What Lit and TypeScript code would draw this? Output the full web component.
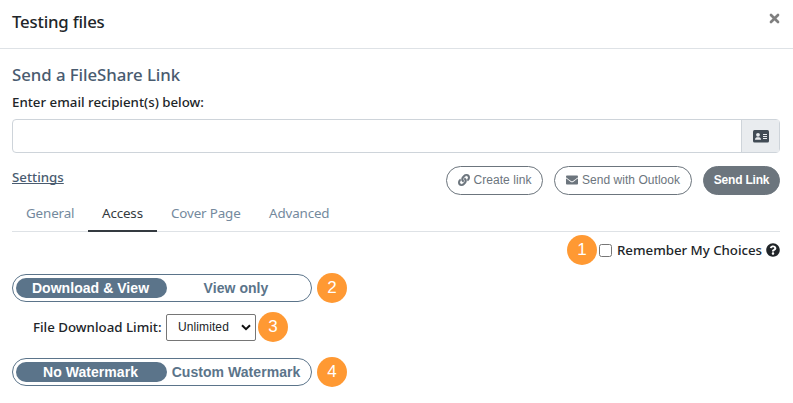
import { LitElement, html, css, svg } from "lit";
import { customElement, property } from "lit/decorators.js";

@customElement("step-badge")
class StepBadge extends LitElement {
  static styles = css`
    :host {
      display: block;
      flex: none;
      width: 30px;
      height: 30px;
      border-radius: 50%;
      background: #ff9933;
      color: #fff;
      font: 17px/30px "Liberation Sans", Arial, sans-serif;
      text-align: center;
    }
  `;
  render() {
    return html`<slot></slot>`;
  }
}

@customElement("pill-toggle")
class PillToggle extends LitElement {
  @property() on = "";
  @property() off = "";
  static styles = css`
    :host {
      box-sizing: border-box;
      display: flex;
      flex: none;
      width: 300px;
      height: 28px;
      padding: 3px;
      border: 1px solid #5b748a;
      border-radius: 14px;
      font: bold 14px/20px "Liberation Sans", Arial, sans-serif;
      letter-spacing: 0.05px;
      text-align: center;
      color: #5b748a;
      white-space: nowrap;
    }
    .on {
      width: 149px;
      height: 20px;
      padding-right: 2px;
      border-radius: 10px;
      background: #5b748a;
      color: #fff;
    }
    .off {
      flex: 1;
      padding-right: 3px;
    }
  `;
  render() {
    return html`<div class="on">${this.on}</div><div class="off">${this.off}</div>`;
  }
}

const linkIcon = svg`<path fill="currentColor" stroke="currentColor" stroke-width="14" d="M326.612 185.391c59.747 59.809 58.927 155.698.36 214.59-.11.12-.24.25-.36.37l-67.2 67.2c-59.27 59.27-155.699 59.262-214.96 0-59.27-59.26-59.27-155.7 0-214.96l37.106-37.106c9.84-9.84 26.786-3.3 27.294 10.606.648 17.722 3.826 35.527 9.69 52.721 1.986 5.822.567 12.262-3.783 16.612l-13.087 13.087c-28.026 28.026-28.905 73.66-1.155 101.96 28.024 28.579 74.086 28.749 102.325.51l67.2-67.19c28.191-28.191 28.073-73.757 0-101.83-3.701-3.694-7.429-6.564-10.341-8.569a16.037 16.037 0 0 1-6.947-12.606c-.396-10.567 3.348-21.456 11.698-29.806l21.054-21.055c5.521-5.521 14.182-6.199 20.584-1.731a152.482 152.482 0 0 1 20.522 17.197zM467.547 44.449c-59.261-59.262-155.69-59.27-214.96 0l-67.2 67.2c-.12.12-.25.25-.36.37-58.566 58.892-59.387 154.781.36 214.59a152.454 152.454 0 0 0 20.521 17.196c6.402 4.468 15.064 3.789 20.584-1.731l21.054-21.055c8.35-8.35 12.094-19.239 11.698-29.806a16.037 16.037 0 0 0-6.947-12.606c-2.912-2.005-6.64-4.875-10.341-8.569-28.073-28.073-28.191-73.639 0-101.83l67.2-67.19c28.239-28.239 74.3-28.069 102.325.51 27.75 28.3 26.872 73.934-1.155 101.96l-13.087 13.087c-4.35 4.35-5.769 10.79-3.783 16.612 5.864 17.194 9.042 34.999 9.69 52.721.509 13.906 17.454 20.446 27.294 10.606l37.106-37.106c59.271-59.259 59.271-155.699.001-214.959z"/>`;
const mailIcon = svg`<path fill="currentColor" d="M502.3 190.8c3.900-3.100 9.700-.2 9.700 4.700V400c0 26.500-21.500 48-48 48H48c-26.500 0-48-21.500-48-48V195.600c0-5 5.700-7.800 9.700-4.700 22.400 17.400 52.100 39.500 154.100 113.600 21.100 15.400 56.700 47.800 92.200 47.600 35.700.3 72-32.800 92.300-47.600 102-74.100 131.600-96.300 154-113.700zM256 320c23.200.4 56.600-29.200 73.400-41.400 132.700-96.300 142.800-104.700 173.400-128.700 5.800-4.500 9.200-11.500 9.200-18.900v-19c0-26.500-21.500-48-48-48H48c-26.500 0-48 21.500-48 48v19c0 7.400 3.400 14.300 9.200 18.900 30.600 23.900 40.700 32.400 173.400 128.700 16.800 12.200 50.200 41.800 73.400 41.400z"/>`;
const helpIcon = svg`<path fill="currentColor" d="M504 256c0 136.997-111.043 248-248 248S8 392.997 8 256C8 119.083 119.043 8 256 8s248 111.083 248 248zM262.655 90c-54.497 0-89.255 22.957-116.549 63.758-3.536 5.286-2.353 12.415 2.715 16.258l34.699 26.310c5.205 3.947 12.621 3.008 16.665-2.122 17.864-22.658 30.113-35.797 57.303-35.797 20.429 0 45.698 13.148 45.698 32.958 0 14.976-12.363 22.667-32.534 33.976C247.128 238.528 216 254.941 216 296v4c0 6.627 5.373 12 12 12h56c6.627 0 12-5.373 12-12v-1.333c0-28.462 83.186-29.647 83.186-106.667 0-58.002-60.165-102-116.531-102zM256 338c-25.365 0-46 20.635-46 46 0 25.364 20.635 46 46 46s46-20.636 46-46c0-25.365-20.635-46-46-46z"/>`;

@customElement("app-root")
class AppRoot extends LitElement {
  static styles = css`
    * {
      box-sizing: border-box;
    }
    :host {
      display: block;
      height: 403px;
      overflow: hidden;
      background: #fff;
      color: #212529;
      font: 500 13.3px/20px "Noto Sans", sans-serif;
      white-space: nowrap;
    }
    svg {
      display: block;
      flex: none;
    }
    header {
      display: flex;
      justify-content: space-between;
      height: 49px;
      padding: 11px 13px 0 12px;
      border-bottom: 1px solid #dee2e6;
    }
    .title {
      font-size: 16.8px;
      line-height: 22px;
      letter-spacing: -0.2px;
    }
    .close {
      margin-top: 2px;
      color: #7f7f7f;
    }
    main {
      padding: 15px 13px 0 12px;
    }
    .heading {
      font-size: 16.8px;
      line-height: 22px;
      letter-spacing: -0.05px;
      color: #495b6f;
    }
    .label {
      margin-top: 6px;
      line-height: 20px;
      font-size: 13.3px;
    }
    .field {
      display: flex;
      height: 34px;
      margin-top: 7px;
      border: 1px solid #ced4da;
      border-radius: 4px;
    }
    .entry {
      flex: 1;
    }
    .addon {
      display: flex;
      align-items: center;
      justify-content: center;
      width: 38px;
      border-left: 1px solid #ced4da;
      background: #e9ecef;
      color: #414b55;
    }
    .bar {
      display: flex;
      height: 29px;
      margin-top: 13px;
    }
    .settings {
      margin-right: auto;
      height: 20px;
      margin-top: 1px;
      color: #495b6f;
      text-decoration: underline;
      text-decoration-skip-ink: none;
      text-underline-offset: 1px;
    }
    .btn {
      display: flex;
      align-items: center;
      justify-content: center;
      gap: 4px;
      margin-left: 11px;
      border: 1px solid #6c757d;
      border-radius: 15px;
      color: #6c757d;
      font: 12px/16px "Liberation Sans", Arial, sans-serif;
      letter-spacing: 0.05px;
      padding-bottom: 1px;
    }
    .create {
      width: 97px;
    }
    .outlook {
      width: 138px;
    }
    .send {
      width: 77px;
      background: #6c757d;
      color: #fff;
      font-weight: bold;
      letter-spacing: -0.2px;
    }
    .tabs {
      display: flex;
      height: 37px;
      border-bottom: 1px solid #dee2e6;
      font-weight: 400;
      font-size: 13.4px;
      letter-spacing: -0.15px;
      line-height: 36px;
      color: #74899d;
    }
    .tab {
      height: 37px;
      padding: 0 0 0 14px;
    }
    .t1 {
      width: 76px;
    }
    .t2 {
      width: 69px;
      border-bottom: 2px solid #343a40;
      color: #343a40;
    }
    .t3 {
      width: 98px;
    }
    .remember {
      display: flex;
      align-items: center;
      justify-content: flex-end;
      height: 30px;
      margin-top: 3px;
    }
    .check {
      width: 13px;
      height: 13px;
      margin: 0 5px 0 2px;
      border: 1px solid #767676;
      border-radius: 2.5px;
    }
    .choice {
      width: 145px;
      letter-spacing: -0.03px;
    }
    .help {
      margin-left: 4px;
    }
    .line {
      display: flex;
      align-items: center;
      height: 30px;
      gap: 5px;
    }
    .first {
      margin-top: 8px;
    }
    .limit {
      margin-top: 9px;
      padding-left: 21px;
      gap: 2px;
    }
    .second {
      margin-top: 15px;
    }
    .caption {
      width: 131px;
    }
    .select {
      display: flex;
      align-items: center;
      justify-content: space-between;
      width: 90px;
      height: 27px;
      padding: 0 4px 0 11px;
      border: 1px solid #767676;
      border-radius: 2px;
      color: #212529;
      font: 12px/16px "Liberation Sans", Arial, sans-serif;
      letter-spacing: 0.1px;
    }
  `;

  render() {
    return html`
      <header>
        <div class="title">Testing files</div>
        <svg class="close" width="11" height="11" viewBox="0 0 11 11"><path d="M2 2L9 9M9 2L2 9" stroke="currentColor" stroke-width="2.7" stroke-linecap="round"/></svg>
      </header>
      <main>
        <div class="heading">Send a FileShare Link</div>
        <div class="label">Enter email recipient(s) below:</div>
        <div class="field">
          <div class="entry"></div>
          <div class="addon">
            <svg width="16" height="13" viewBox="0 0 16 13">
              <rect width="16" height="12.500" rx="1.500" fill="currentColor"/>
              <circle cx="5" cy="4.800" r="1.900" fill="#e9ecef"/>
              <path d="M2 9.800c0-2 1.200-2.600 3-2.600s3 .6 3 2.600zM10 4h4v1h-4zM10 6h4v1h-4zM10 8h4v1h-4z" fill="#e9ecef"/>
            </svg>
          </div>
        </div>
        <div class="bar">
          <div class="settings">Settings</div>
          <div class="btn create"><svg width="12" height="12" viewBox="0 0 512 512">${linkIcon}</svg><span>Create link</span></div>
          <div class="btn outlook"><svg width="12" height="12" viewBox="0 0 512 512">${mailIcon}</svg><span>Send with Outlook</span></div>
          <div class="btn send">Send Link</div>
        </div>
        <div class="tabs">
          <div class="tab t1">General</div>
          <div class="tab t2">Access</div>
          <div class="tab t3">Cover Page</div>
          <div class="tab">Advanced</div>
        </div>
        <div class="remember">
          <step-badge>1</step-badge>
          <div class="check"></div>
          <span class="choice">Remember My Choices</span>
          <svg class="help" width="14" height="14" viewBox="0 0 512 512">${helpIcon}</svg>
        </div>
        <div class="line first">
          <pill-toggle on="Download &amp; View" off="View only"></pill-toggle>
          <step-badge>2</step-badge>
        </div>
        <div class="line limit">
          <div class="caption">File Download Limit:</div>
          <div class="select">Unlimited
            <svg width="10" height="7" viewBox="0 0 10 7"><path d="M1 1.200L5 5.200L9 1.200" fill="none" stroke="#111" stroke-width="2"/></svg>
          </div>
          <step-badge>3</step-badge>
        </div>
        <div class="line second">
          <pill-toggle on="No Watermark" off="Custom Watermark"></pill-toggle>
          <step-badge>4</step-badge>
        </div>
      </main>
    `;
  }
}
